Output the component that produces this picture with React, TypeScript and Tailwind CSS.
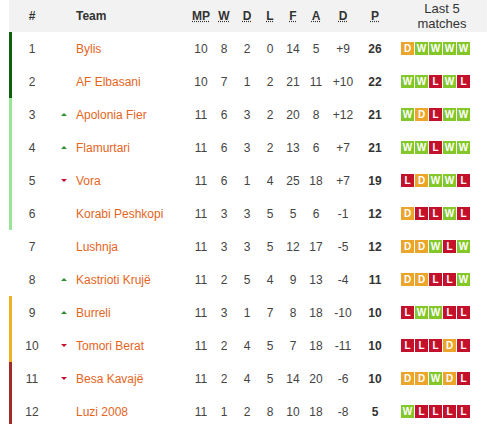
import React from 'react';

type Row = {
  pos: number;
  move: 'up' | 'down' | '';
  team: string;
  mp: number;
  w: number;
  d: number;
  l: number;
  f: number;
  a: number;
  diff: string;
  p: number;
  form: string;
  edge: string;
};

const rows: Row[] = [
  { pos: 1, move: '', team: 'Bylis', mp: 10, w: 8, d: 2, l: 0, f: 14, a: 5, diff: '+9', p: 26, form: 'DWWWW', edge: 'border-l-[#0b620b]' },
  { pos: 2, move: '', team: 'AF Elbasani', mp: 10, w: 7, d: 1, l: 2, f: 21, a: 11, diff: '+10', p: 22, form: 'WWLWL', edge: 'border-l-[#0b620b]' },
  { pos: 3, move: 'up', team: 'Apolonia Fier', mp: 11, w: 6, d: 3, l: 2, f: 20, a: 8, diff: '+12', p: 21, form: 'WDLWW', edge: 'border-l-[#99e497]' },
  { pos: 4, move: 'up', team: 'Flamurtari', mp: 11, w: 6, d: 3, l: 2, f: 13, a: 6, diff: '+7', p: 21, form: 'WWLWW', edge: 'border-l-[#99e497]' },
  { pos: 5, move: 'down', team: 'Vora', mp: 11, w: 6, d: 1, l: 4, f: 25, a: 18, diff: '+7', p: 19, form: 'LDWWL', edge: 'border-l-[#99e497]' },
  { pos: 6, move: '', team: 'Korabi Peshkopi', mp: 11, w: 3, d: 3, l: 5, f: 5, a: 6, diff: '-1', p: 12, form: 'DLLWL', edge: 'border-l-[#99e497]' },
  { pos: 7, move: '', team: 'Lushnja', mp: 11, w: 3, d: 3, l: 5, f: 12, a: 17, diff: '-5', p: 12, form: 'DDWLW', edge: 'border-l-transparent' },
  { pos: 8, move: 'up', team: 'Kastrioti Krujë', mp: 11, w: 2, d: 5, l: 4, f: 9, a: 13, diff: '-4', p: 11, form: 'DDLLW', edge: 'border-l-transparent' },
  { pos: 9, move: 'up', team: 'Burreli', mp: 11, w: 3, d: 1, l: 7, f: 8, a: 18, diff: '-10', p: 10, form: 'LWWLL', edge: 'border-l-[#f1b024]' },
  { pos: 10, move: 'down', team: 'Tomori Berat', mp: 11, w: 2, d: 4, l: 5, f: 7, a: 18, diff: '-11', p: 10, form: 'LLLDL', edge: 'border-l-[#f1b024]' },
  { pos: 11, move: 'down', team: 'Besa Kavajë', mp: 11, w: 2, d: 4, l: 5, f: 14, a: 20, diff: '-6', p: 10, form: 'DDWDL', edge: 'border-l-[#a32b2b]' },
  { pos: 12, move: '', team: 'Luzi 2008', mp: 11, w: 1, d: 2, l: 8, f: 10, a: 18, diff: '-8', p: 5, form: 'WLLLL', edge: 'border-l-[#a32b2b]' },
];

const formColor: Record<string, string> = {
  W: 'bg-[#83c72a]',
  D: 'bg-[#eca52b]',
  L: 'bg-[#c3112c]',
};

// fixed column widths so header and body line up
const cols = {
  pos: 'w-[40px] text-center',
  move: 'w-[24px] flex justify-center',
  team: 'w-[113px]',
  mp: 'w-[24px] text-center',
  w: 'w-[22px] text-center',
  d: 'w-[24px] text-center',
  l: 'w-[22px] text-center',
  f: 'w-[24px] text-center',
  a: 'w-[22px] text-center',
  diff: 'w-[32px] text-center',
  p: 'w-[32px] text-center',
};

const Arrow: React.FC<{ dir: Row['move'] }> = ({ dir }) => {
  if (dir === 'up') {
    return <span className="block w-0 h-0 border-x-[3px] border-x-transparent border-b-[3px] border-b-[#2f8f2f]" />;
  }
  if (dir === 'down') {
    return <span className="block w-0 h-0 border-x-[3px] border-x-transparent border-t-[3px] border-t-[#c3112c]" />;
  }
  return null;
};

const App: React.FC = () => {
  return (
    <div
      className="w-[487px] h-[424px] overflow-hidden bg-white pl-[9px] text-[12px] text-[#444]"
      style={{ fontFamily: '"Liberation Sans", Arial, sans-serif' }}
    >
      {/* Cabecera */}
      <div className="flex items-center h-[32px] bg-[#f2f2f2] pl-[3px] font-bold text-[#333] leading-[15px]">
        <div className={cols.pos}>#</div>
        <div className={cols.move} />
        <div className={cols.team}>Team</div>
        <div className={cols.mp}><abbr title="Matches played">MP</abbr></div>
        <div className={cols.w}><abbr title="Wins">W</abbr></div>
        <div className={cols.d}><abbr title="Draws">D</abbr></div>
        <div className={cols.l}><abbr title="Losses">L</abbr></div>
        <div className={cols.f}><abbr title="Goals for">F</abbr></div>
        <div className={cols.a}><abbr title="Goals against">A</abbr></div>
        <div className={cols.diff}><abbr title="Goal difference">D</abbr></div>
        <div className={cols.p}><abbr title="Points">P</abbr></div>
        <div className="flex-1 pl-[6px] text-center text-[13px] font-normal text-[#333]">
          Last 5
          <br />
          matches
        </div>
      </div>

      {/* Filas */}
      {rows.map((r) => (
        <div key={r.pos} className={`flex items-center h-[33px] border-l-[3px] ${r.edge}`}>
          <div className={cols.pos}>{r.pos}</div>
          <div className={cols.move}>
            <Arrow dir={r.move} />
          </div>
          <div className={`${cols.team} text-[#e5651d] whitespace-nowrap`}>{r.team}</div>
          <div className={cols.mp}>{r.mp}</div>
          <div className={cols.w}>{r.w}</div>
          <div className={cols.d}>{r.d}</div>
          <div className={cols.l}>{r.l}</div>
          <div className={cols.f}>{r.f}</div>
          <div className={cols.a}>{r.a}</div>
          <div className={cols.diff}>{r.diff}</div>
          <div className={`${cols.p} font-bold text-[#333]`}>{r.p}</div>
          <div className="flex gap-px pl-[10px]">
            {r.form.split('').map((m, i) => (
              <span
                key={i}
                className={`w-[13px] h-[13px] flex items-center justify-center text-white text-[10px] font-bold leading-none ${formColor[m]}`}
              >
                {m}
              </span>
            ))}
          </div>
        </div>
      ))}
    </div>
  );
};

export default App;
